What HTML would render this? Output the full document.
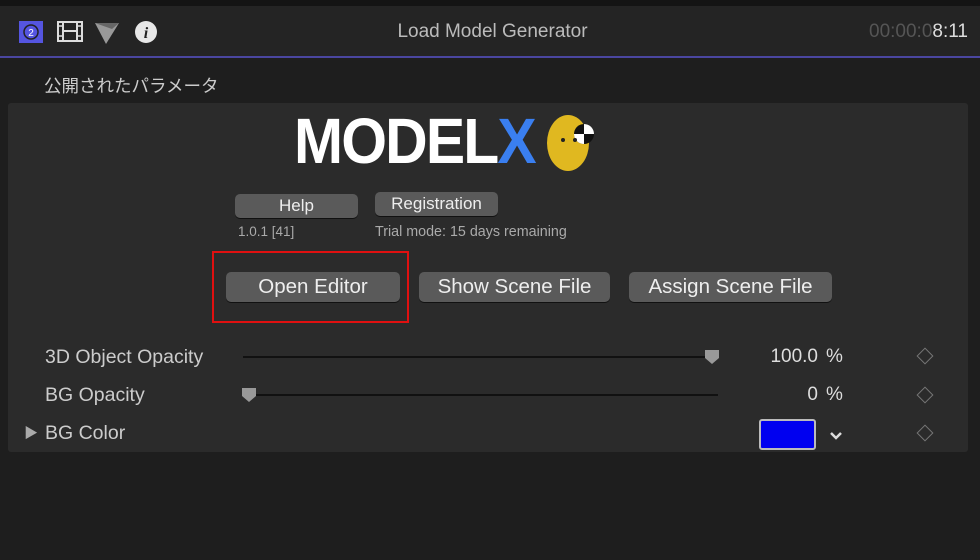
<!DOCTYPE html>
<html><head><meta charset="utf-8"><style>
body{margin:0;width:980px;height:560px;background:#1e1e1e;font-family:"Liberation Sans","Noto Sans CJK JP",sans-serif;position:relative;overflow:hidden;color:#d8d8d8}
.a{position:absolute}
.btn{position:absolute;background:#5a5a5a;border-radius:5px;color:#eee;text-align:center;box-shadow:0 1px 0 #111}
.dia{position:absolute;width:10px;height:10px;border:1.5px solid #777;transform:rotate(45deg)}
</style></head><body>
<div class="a" style="left:0;top:0;width:980px;height:6px;background:#141414"></div>
<div class="a" style="left:0;top:6px;width:980px;height:50px;background:#242424"></div>
<div class="a" style="left:0;top:56px;width:980px;height:2px;background:#4a46a0"></div>
<svg class="a" style="left:18px;top:20px" width="140" height="26">
<rect x="1" y="1" width="24" height="22" fill="#5555e0"/>
<circle cx="13" cy="12" r="7" fill="none" stroke="#222" stroke-width="1.5"/>
<text x="13" y="16" font-size="10" text-anchor="middle" fill="#fff" font-family="Liberation Sans">2</text>
<rect x="40" y="2" width="24" height="19" fill="none" stroke="#ddd" stroke-width="2"/>
<line x1="45" y1="2" x2="45" y2="21" stroke="#ddd" stroke-width="2"/><line x1="59" y1="2" x2="59" y2="21" stroke="#ddd" stroke-width="2"/>
<line x1="45" y1="11" x2="59" y2="11" stroke="#ddd" stroke-width="2"/>
<path d="M40 6h5M40 16h5M59 6h5M59 16h5" stroke="#ddd" stroke-width="1.5"/>
<path d="M77 3 L101 3 L88 24 Z" fill="#999"/><path d="M77 3 L101 3 L94 9 Z" fill="#666"/>
<circle cx="128" cy="12" r="11" fill="#e8e8e8"/>
<text x="128" y="18" font-size="16" font-style="italic" font-weight="bold" text-anchor="middle" fill="#222" font-family="Liberation Serif">i</text>
</svg>
<div class="a" style="left:0;width:985px;top:21px;text-align:center;font-size:19px;color:#bbb">Load Model Generator</div>
<div class="a" style="right:12px;top:21px;font-size:19px;color:#555">00:00:0<span style="color:#ddd">8:11</span></div>
<div class="a" style="left:44px;top:73px;font-size:17.5px;color:#ccc">公開されたパラメータ</div>
<div class="a" style="left:8px;top:103px;width:960px;height:349px;background:#2b2b2b;border-radius:3px"></div>
<div class="a" style="left:294px;top:104px;font-size:64px;font-weight:bold;color:#fff;letter-spacing:-2px;transform:scaleX(0.92);transform-origin:left">MODEL<span style="color:#3a7ff0">X</span></div>
<svg class="a" style="left:543px;top:108px" width="56" height="70"><ellipse cx="25" cy="35" rx="21" ry="28" fill="#e0b820"/><circle cx="41" cy="26" r="10" fill="#111"/><path d="M41 16 A10 10 0 0 1 51 26 L41 26 Z M41 36 A10 10 0 0 1 31 26 L41 26Z" fill="#fff"/><circle cx="20" cy="32" r="2" fill="#222"/><circle cx="32" cy="32" r="2" fill="#222"/></svg>
<div class="btn" style="left:235px;top:194px;width:123px;height:24px;line-height:24px;font-size:17px">Help</div>
<div class="btn" style="left:375px;top:192px;width:123px;height:24px;line-height:24px;font-size:17px">Registration</div>
<div class="a" style="left:238px;top:224px;font-size:13.5px;color:#aaa">1.0.1 [41]</div>
<div class="a" style="left:375px;top:224px;font-size:14.3px;color:#aaa">Trial mode: 15 days remaining</div>
<div class="a" style="left:212px;top:251px;width:197px;height:72px;border:2px solid #e01010;box-sizing:border-box"></div>
<div class="btn" style="left:226px;top:272px;width:174px;height:30px;line-height:30px;font-size:20.5px">Open Editor</div>
<div class="btn" style="left:419px;top:272px;width:191px;height:30px;line-height:30px;font-size:20.5px">Show Scene File</div>
<div class="btn" style="left:629px;top:272px;width:203px;height:30px;line-height:30px;font-size:20.5px">Assign Scene File</div>
<div class="a" style="left:45px;top:346px;font-size:19.5px;color:#ccc">3D Object Opacity</div>
<div class="a" style="left:45px;top:384px;font-size:19.5px;color:#ccc">BG Opacity</div>
<div class="a" style="left:24px;top:423px;font-size:14px;color:#aaa">▶</div>
<div class="a" style="left:45px;top:422px;font-size:19.5px;color:#ccc">BG Color</div>
<div class="a" style="left:243px;top:356px;width:475px;height:2px;background:#111"></div>
<div class="a" style="left:243px;top:394px;width:475px;height:2px;background:#111"></div>
<svg class="a" style="left:704px;top:349px" width="16" height="16"><path d="M1 1H15V9L8 15L1 9Z" fill="#999"/></svg>
<svg class="a" style="left:241px;top:387px" width="16" height="16"><path d="M1 1H15V9L8 15L1 9Z" fill="#999"/></svg>
<div class="a" style="right:162px;top:346px;font-size:19px;color:#ddd">100.0</div>
<div class="a" style="left:826px;top:346px;font-size:19px;color:#ddd">%</div>
<div class="a" style="right:162px;top:384px;font-size:19px;color:#ddd">0</div>
<div class="a" style="left:826px;top:384px;font-size:19px;color:#ddd">%</div>
<div class="a" style="left:759px;top:419px;width:57px;height:31px;background:#0000f0;border:2px solid #bbb;border-radius:3px;box-sizing:border-box"></div>
<svg class="a" style="left:829px;top:431px" width="14" height="10"><path d="M2 2L7 7L12 2" fill="none" stroke="#ddd" stroke-width="2.5"/></svg>
<div class="dia" style="left:919px;top:350px"></div>
<div class="dia" style="left:919px;top:389px"></div>
<div class="dia" style="left:919px;top:427px"></div>
</body></html>
